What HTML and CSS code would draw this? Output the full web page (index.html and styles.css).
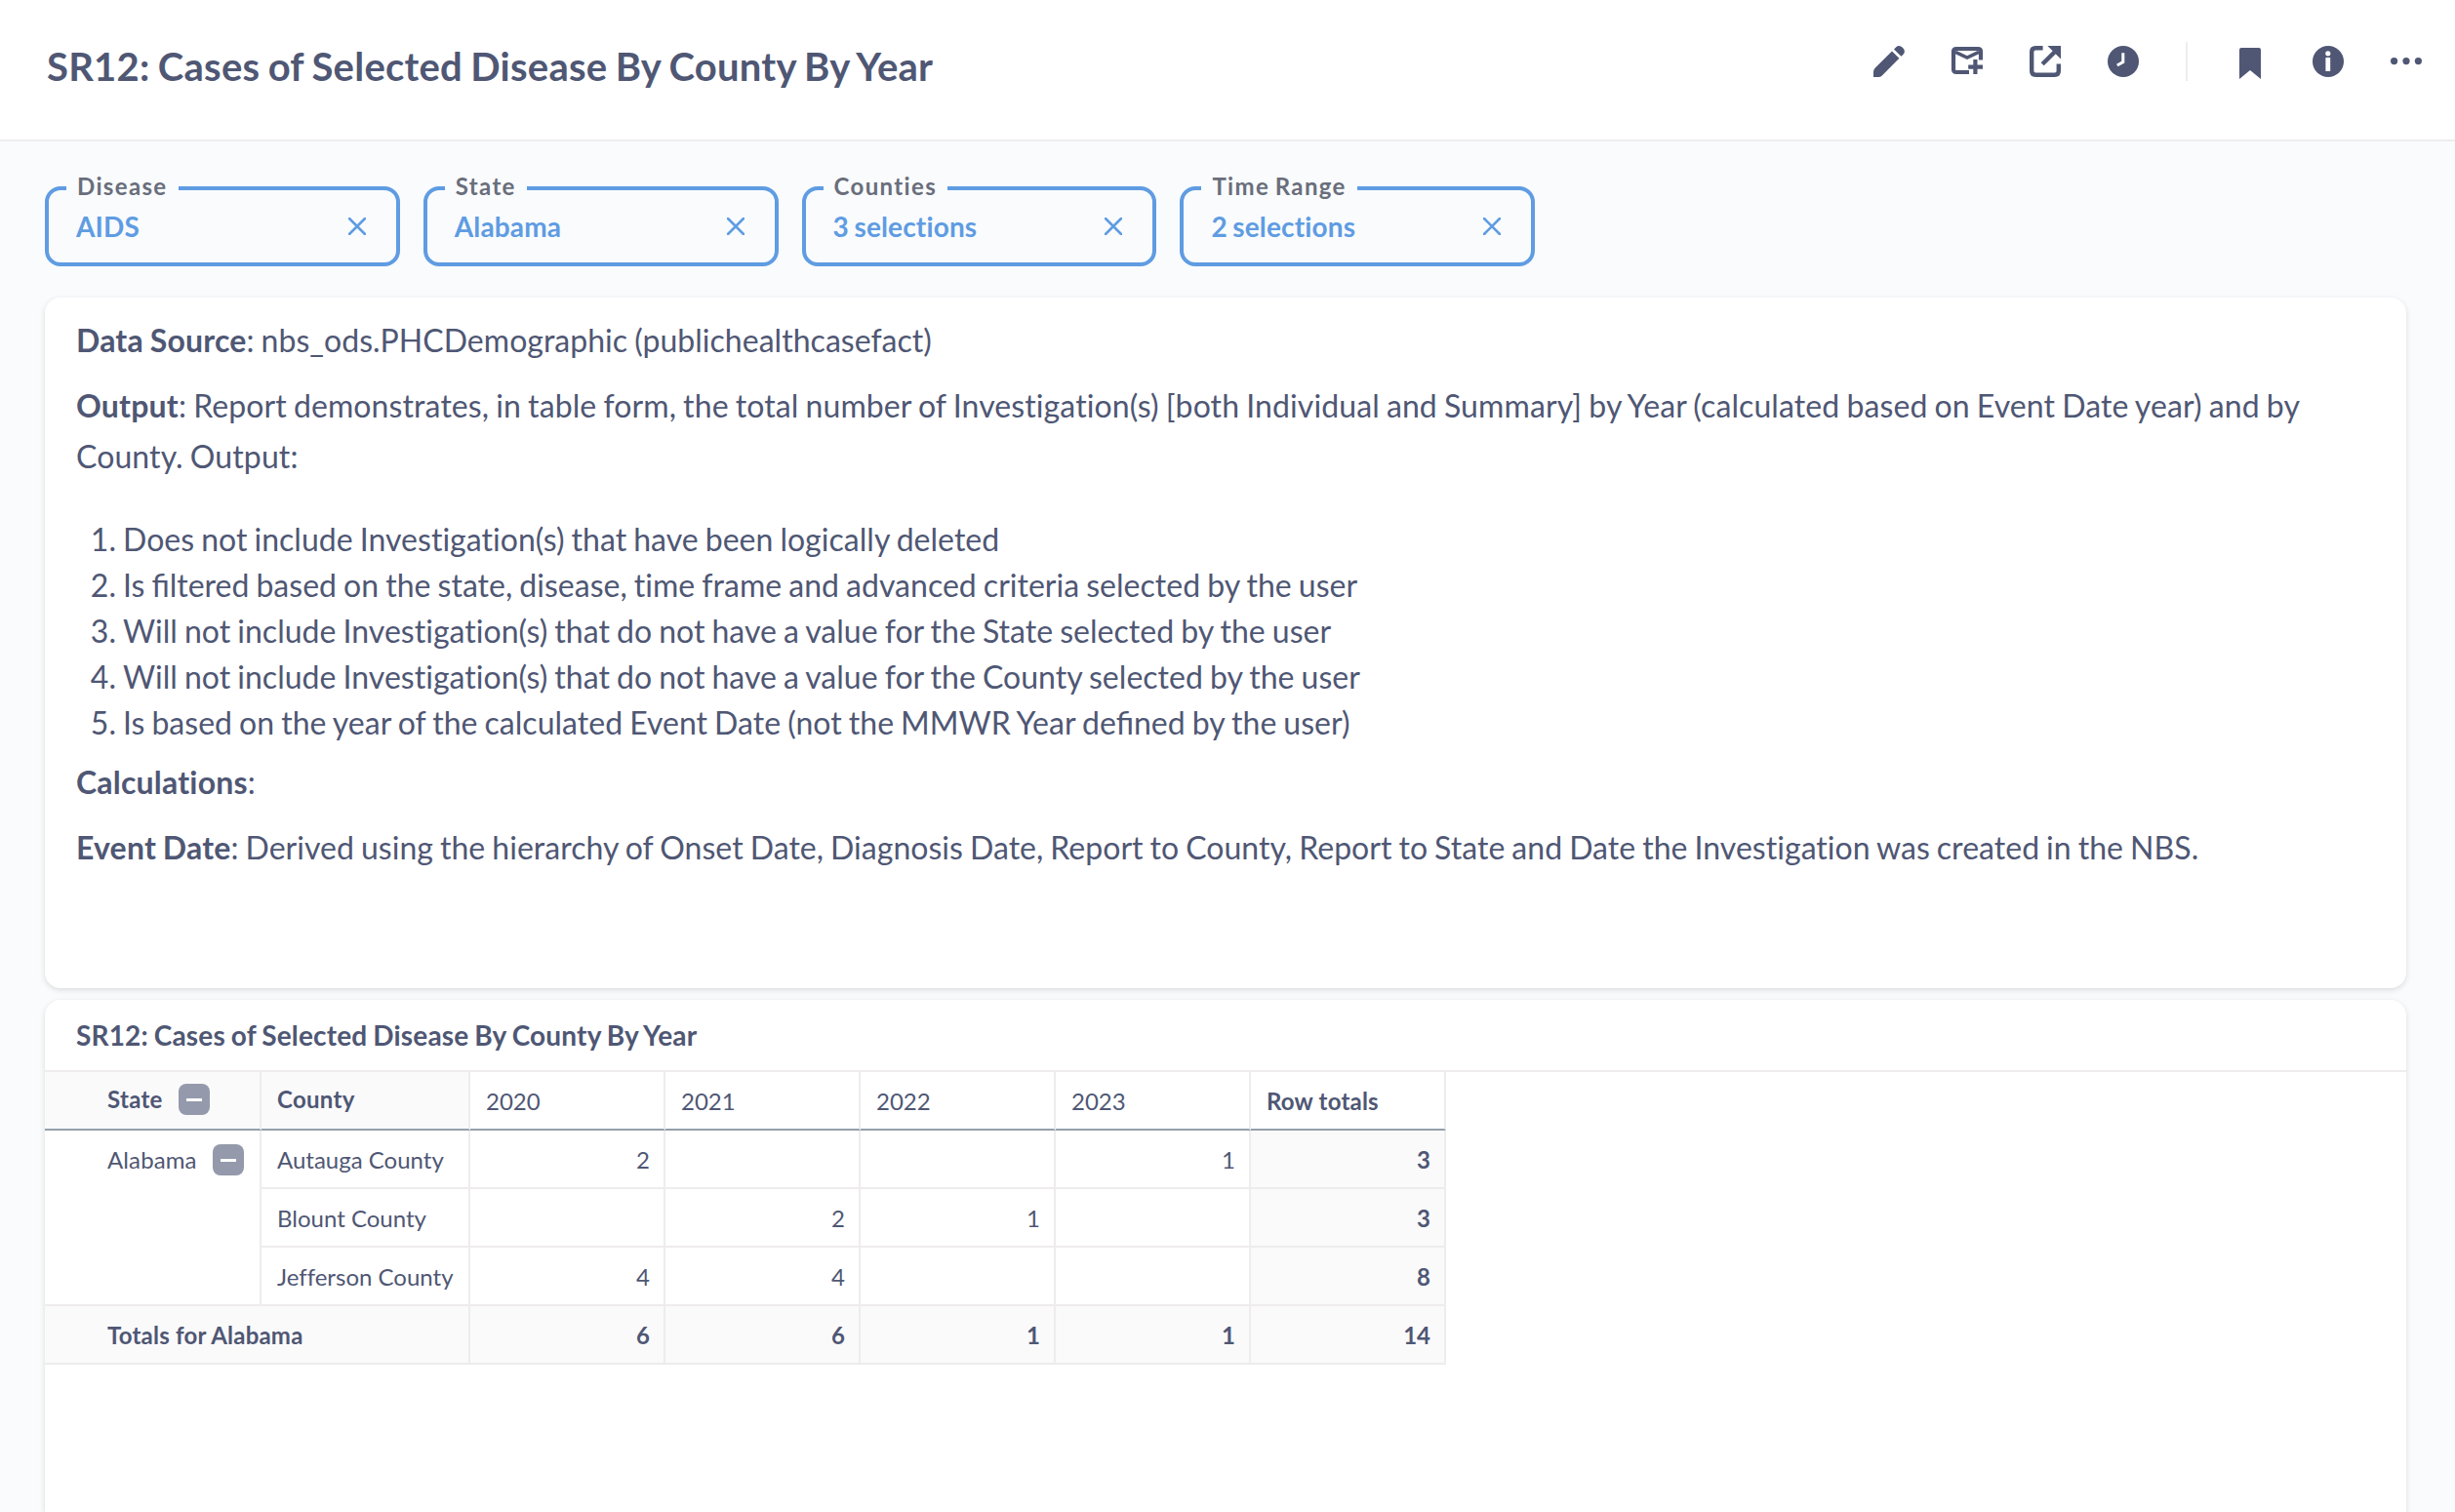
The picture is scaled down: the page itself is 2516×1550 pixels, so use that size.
FILE: index.html
```html
<!DOCTYPE html>
<html lang="en">
<head>
<meta charset="utf-8">
<title>SR12: Cases of Selected Disease By County By Year</title>
<link rel="stylesheet" href="styles.css">
</head>
<body>
<header class="header">
  <h1 class="header-title">SR12: Cases of Selected Disease By County By Year</h1>
  <div class="toolbar">
    <svg class="icon" viewBox="0 0 16 16"><path d="M9.5 2.7 13.2 6.4 4.4 15.2Q3.6 16 2.6 16H0V13.4Q0 12.3 .8 11.4ZM10.5 1.7 11.5.7Q13.2 -.8 14.9.9 16.8 2.8 15.3 4.4L14.2 5.4Z"/></svg>
    <svg class="icon" viewBox="0 0 16 16"><path d="M9 13.5H2.4Q1 13.5 1 12.1V2.9Q1 1.5 2.4 1.5H13.6Q15 1.5 15 2.9V7.3M12.2 7V14.5M8.6 10.8H16" fill="none" stroke="currentColor" stroke-width="2.1"/><path d="M2 3.2 8 6 14 3.2" fill="none" stroke="currentColor" stroke-width="1.7"/></svg>
    <svg class="icon" viewBox="0 0 16 16"><path d="M6.8 1.1H3.1Q1.1 1.1 1.1 3.1V12.9Q1.1 14.9 3.1 14.9H12.9Q14.9 14.9 14.9 12.9V9.2M6.6 9.4 14 2" fill="none" stroke="currentColor" stroke-width="2.2"/><path d="M9.2 0H16V6.8Z"/></svg>
    <svg class="icon" viewBox="0 0 16 16"><circle cx="8" cy="8" r="8"/><path d="M7.9 3.6V8.3L4.9 10" fill="none" stroke="#fff" stroke-width="1.5"/></svg>
    <span class="toolbar-divider"></span>
    <svg class="icon" viewBox="0 0 16 16"><path d="M3.5 1H12.5Q13.5 1 13.5 2V17L8 12.5 2.5 17V2Q2.5 1 3.5 1Z"/></svg>
    <svg class="icon" viewBox="0 0 16 16"><circle cx="8" cy="8" r="8"/><circle cx="7.9" cy="3.9" r="1.3" fill="#fff"/><path d="M6.7 6H9.1V13H6.7Z" fill="#fff"/></svg>
    <svg class="icon" viewBox="0 0 16 16"><circle cx="1.8" cy="7.8" r="1.8"/><circle cx="8" cy="7.8" r="1.8"/><circle cx="14.2" cy="7.8" r="1.8"/></svg>
  </div>
</header>
<main class="content">
  <div class="filters">
    <fieldset class="filter"><legend class="filter-label">Disease</legend><span class="filter-value">AIDS</span><svg class="filter-clear" viewBox="0 0 18 18"><path d="M1 1 17 17M17 1 1 17"/></svg></fieldset>
    <fieldset class="filter"><legend class="filter-label">State</legend><span class="filter-value">Alabama</span><svg class="filter-clear" viewBox="0 0 18 18"><path d="M1 1 17 17M17 1 1 17"/></svg></fieldset>
    <fieldset class="filter"><legend class="filter-label">Counties</legend><span class="filter-value">3 selections</span><svg class="filter-clear" viewBox="0 0 18 18"><path d="M1 1 17 17M17 1 1 17"/></svg></fieldset>
    <fieldset class="filter"><legend class="filter-label">Time Range</legend><span class="filter-value">2 selections</span><svg class="filter-clear" viewBox="0 0 18 18"><path d="M1 1 17 17M17 1 1 17"/></svg></fieldset>
  </div>
  <section class="card notes">
    <p><strong>Data Source</strong>: nbs_ods.PHCDemographic (publichealthcasefact)</p>
    <p class="summary"><strong>Output</strong>: Report demonstrates, in table form, the total number of Investigation(s) [both Individual and Summary] by Year (calculated based on Event Date year) and by County. Output:</p>
    <ol>
      <li>Does not include Investigation(s) that have been logically deleted</li>
      <li>Is <span class="lig">filtered</span> based on the state, disease, time frame and advanced criteria selected by the user</li>
      <li>Will not include Investigation(s) that do not have a value for the State selected by the user</li>
      <li>Will not include Investigation(s) that do not have a value for the County selected by the user</li>
      <li>Is based on the year of the calculated Event Date (not the MMWR Year <span class="lig">defined</span> by the user)</li>
    </ol>
    <p><strong>Calculations</strong>:</p>
    <p><strong>Event Date</strong>: Derived using the hierarchy of Onset Date, Diagnosis Date, Report to County, Report to State and Date the Investigation was created in the NBS.</p>
  </section>
  <section class="card report">
    <h2 class="report-title">SR12: Cases of Selected Disease By County By Year</h2>
    <table class="pivot">
      <colgroup><col class="col-state"><col class="col-county"><col class="col-year"><col class="col-year"><col class="col-year"><col class="col-year"><col class="col-year"></colgroup>
      <thead>
        <tr>
          <th class="row-head shaded lead"><span class="cell">State<span class="toggle"></span></span></th>
          <th class="row-head shaded">County</th>
          <th class="year">2020</th><th class="year">2021</th><th class="year">2022</th><th class="year">2023</th>
          <th>Row totals</th>
        </tr>
      </thead>
      <tbody>
        <tr><td class="lead group" rowspan="3"><span class="cell">Alabama<span class="toggle"></span></span></td><td>Autauga County</td><td class="num">2</td><td></td><td></td><td class="num">1</td><td class="num total">3</td></tr>
        <tr><td>Blount County</td><td></td><td class="num">2</td><td class="num">1</td><td></td><td class="num total">3</td></tr>
        <tr><td>Jefferson County</td><td class="num">4</td><td class="num">4</td><td></td><td></td><td class="num total">8</td></tr>
        <tr><td class="lead total" colspan="2">Totals for Alabama</td><td class="num total">6</td><td class="num total">6</td><td class="num total">1</td><td class="num total">1</td><td class="num total">14</td></tr>
      </tbody>
    </table>
  </section>
</main>
</body>
</html>
```
FILE: styles.css
```css
* { box-sizing: border-box; }
body {
  margin: 0;
  height: 1550px;
  overflow: hidden;
  display: flex;
  flex-direction: column;
  background: #f9fbfd;
  color: #4f5774;
  font-family: Lato, sans-serif;
  font-variant-ligatures: no-common-ligatures;
}
.header {
  flex: none;
  height: 145px;
  padding: 0 34px 0 48px;
  display: flex;
  justify-content: space-between;
  background: #fff;
  border-bottom: 2px solid #eeecec;
}
.header-title { margin: 44px 0 0; font-size: 40px; line-height: 48px; font-weight: 700; letter-spacing: 0.23px; word-spacing: -1.6px; }
.toolbar { display: flex; align-items: center; gap: 48px; height: 40px; margin-top: 43px; }
.icon { width: 32px; height: 32px; fill: currentColor; overflow: visible; }
.toolbar-divider { width: 2px; height: 40px; background: #eeecec; }
.content { flex: 1; min-height: 0; display: flex; flex-direction: column; padding: 36px 50px 0 46px; }
.filters { flex: none; display: flex; gap: 24px; height: 92px; }
.filter {
  display: flex;
  align-items: center;
  justify-content: space-between;
  width: 363.8px;
  height: 92px;
  margin: 0;
  padding: 0 31px 11px 28px;
  border: 4px solid #5f9ce2;
  border-radius: 16px;
  color: #5f9ce2;
}
.filter-label {
  height: 24px;
  margin-left: -10px;
  padding: 0 11px;
  color: #696e7b;
  font-size: 24px;
  line-height: 20px;
  font-weight: 700;
  letter-spacing: 1.35px;
  word-spacing: -1.5px;
}
.filter-value { font-size: 28px; line-height: 34px; font-weight: 700; letter-spacing: 0.15px; word-spacing: -1.5px; }
.filter-clear { width: 18px; height: 18px; fill: none; stroke: currentColor; stroke-width: 2.6; stroke-linecap: round; }
.card { background: #fff; border-radius: 16px; box-shadow: 0 2px 6px rgba(0, 0, 0, 0.13); }
.notes {
  flex: none;
  height: 708px;
  margin-top: 32px;
  padding: 18px 32px 0;
  font-size: 32px;
  line-height: 52px;
  letter-spacing: 0.03px;
  word-spacing: -1.2px;
}
.notes p { margin: 0 0 15px; }
.notes strong { letter-spacing: 0.2px; }
.notes .summary { letter-spacing: 0.1px; }
.notes ol { margin: 35px 0 12px; padding-left: 48px; line-height: 47px; }
.lig { font-variant-ligatures: common-ligatures; letter-spacing: 0; }
.report { flex: 1; min-height: 0; margin-top: 12px; border-radius: 16px 16px 0 0; overflow: hidden; }
.report-title {
  height: 74px;
  margin: 0;
  padding: 19px 32px 0;
  border-bottom: 2px solid #eeecec;
  font-size: 28px;
  line-height: 34px;
  font-weight: 700;
  letter-spacing: 0.17px;
  word-spacing: -1.1px;
}
.pivot {
  width: 1436px;
  table-layout: fixed;
  border-collapse: separate;
  border-spacing: 0;
  font-size: 24px;
  line-height: 28px;
  white-space: nowrap;
}
.col-state { width: 222px; }
.col-county { width: 214px; }
.col-year { width: 200px; }
.pivot th, .pivot td {
  height: 60px;
  padding: 2px 14px 0 16px;
  text-align: left;
  border-right: 2px solid #eeecec;
  border-bottom: 2px solid #eeecec;
}
.pivot th { font-weight: 700; letter-spacing: 0.2px; border-bottom-color: #949fab; }
.pivot th.row-head { padding-top: 0; padding-bottom: 2px; letter-spacing: 0.3px; }
.pivot th.year { font-weight: 400; letter-spacing: 0; }
.pivot .lead { padding-left: 64px; }
.pivot .shaded, .pivot .total { background: #fafafb; }
.pivot .group { vertical-align: top; padding-top: 14px; letter-spacing: 0.12px; }
.pivot .num { text-align: right; }
.pivot .total { font-weight: 700; }
.pivot .lead.total { letter-spacing: 0.2px; }
.cell { display: flex; align-items: center; gap: 16px; }
.toggle { display: flex; align-items: center; justify-content: center; width: 32px; height: 32px; border-radius: 8px; background: #949aab; }
.toggle::before { content: ""; width: 16px; height: 3px; background: #fff; }
```
